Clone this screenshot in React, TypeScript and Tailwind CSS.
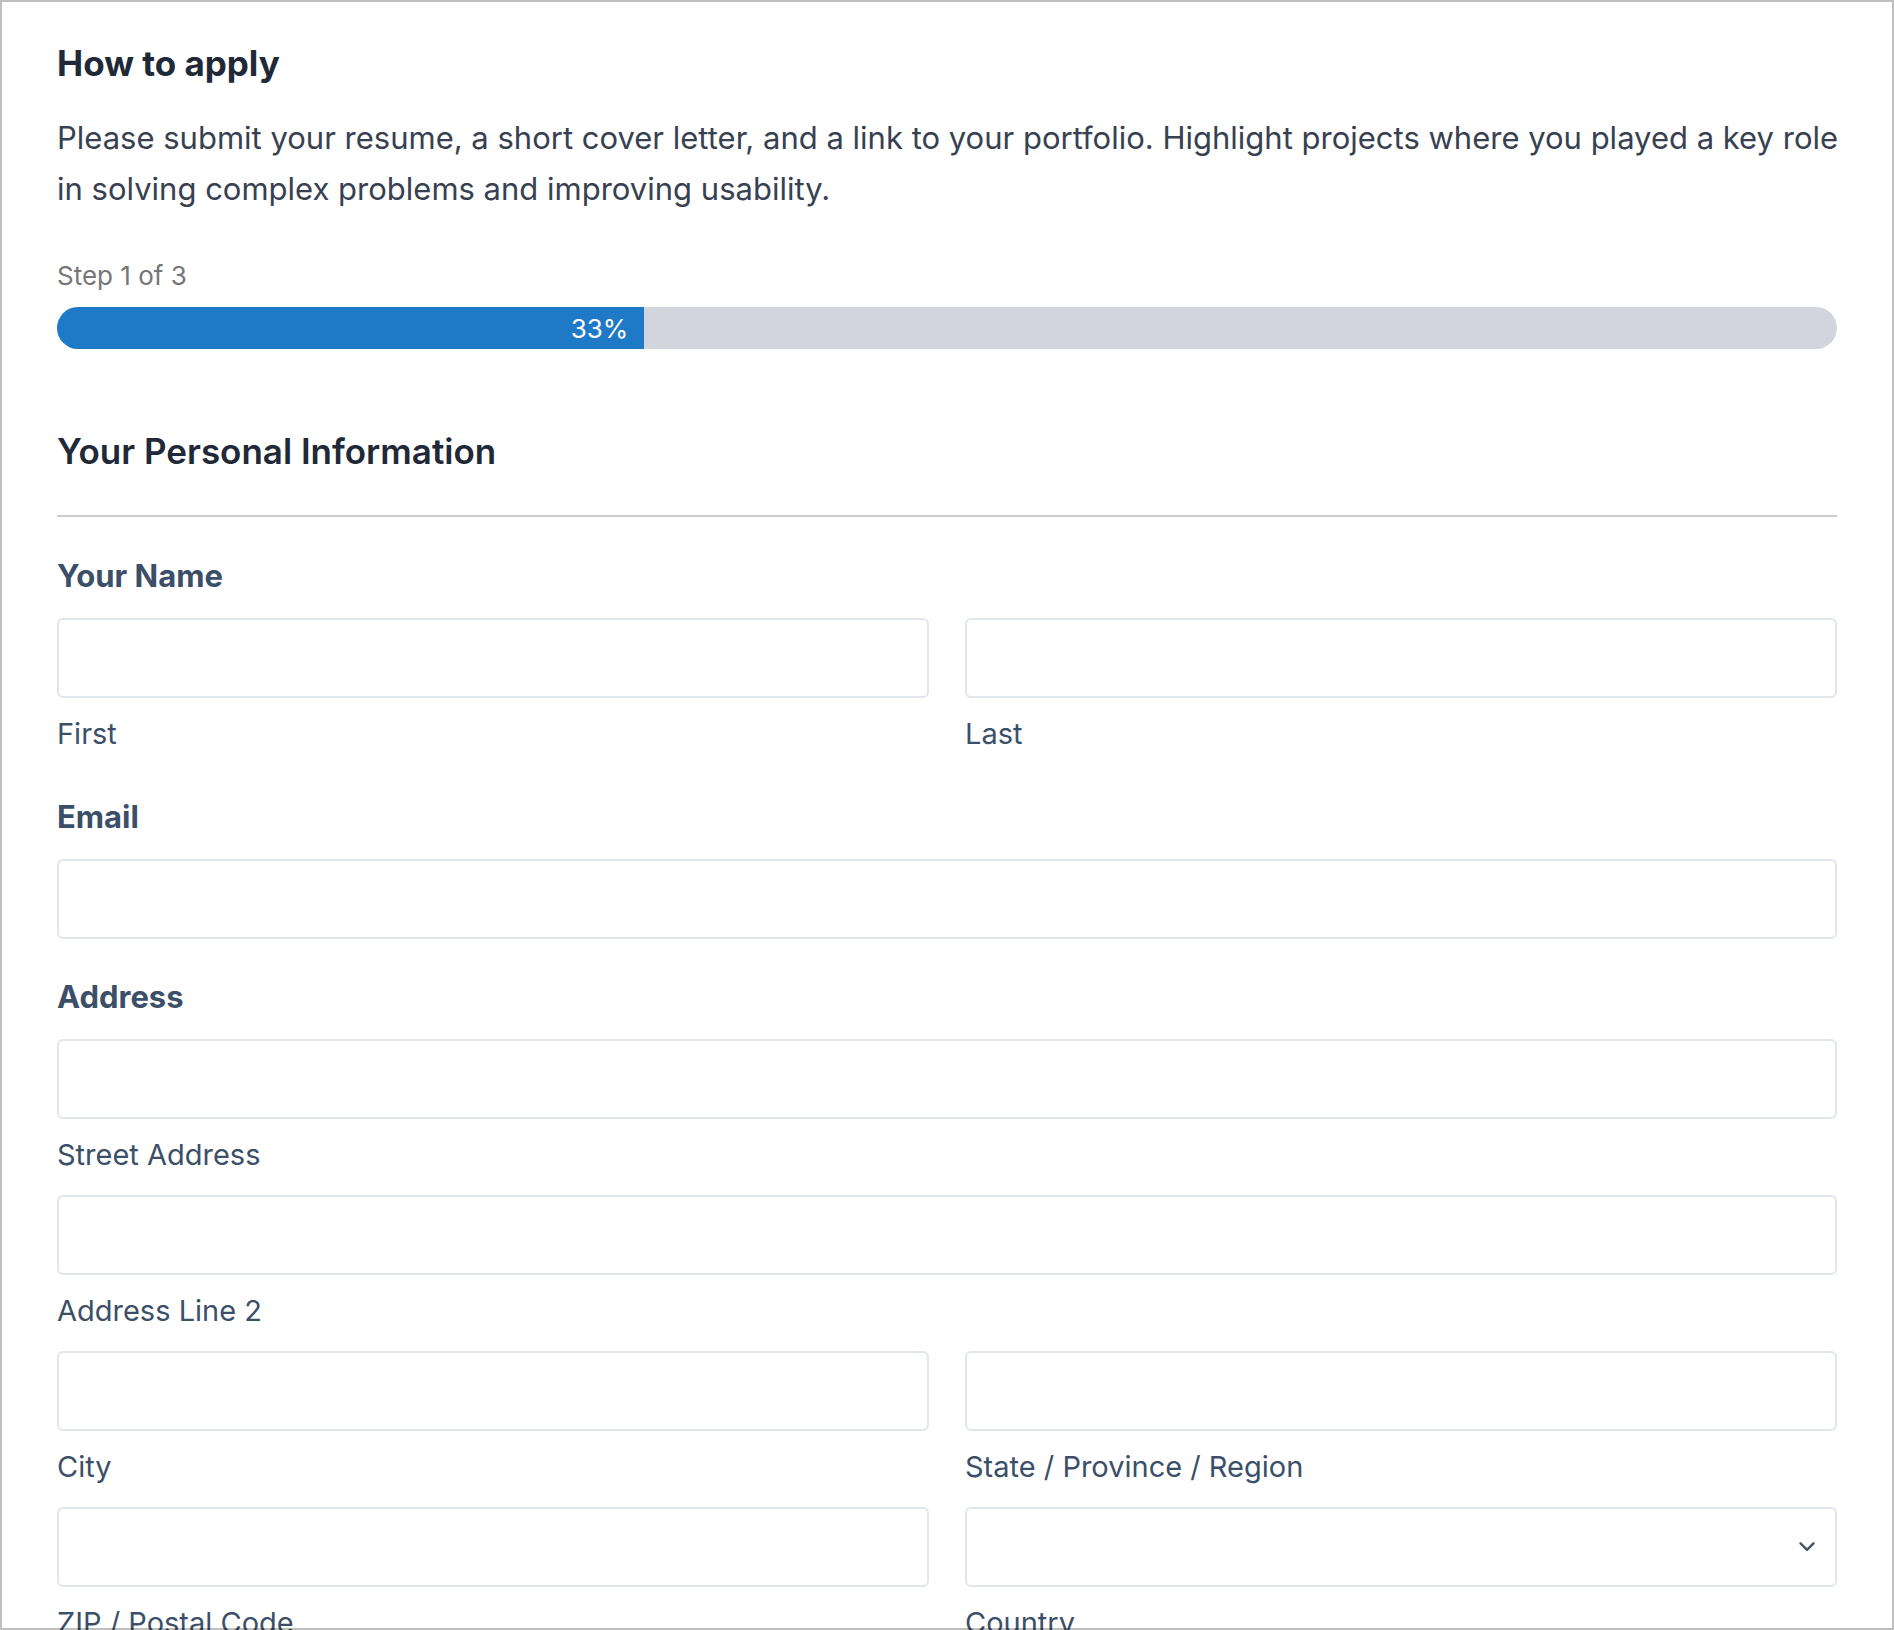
import { useState } from 'react';

const inputClass =
  'block w-full h-20 px-6 bg-white border-2 border-[#e0e6eb] rounded-md text-3xl text-[#3b5068] outline-none focus:border-[#1e7ac6]';

// @ts-ignore
function Field({ id, label, children }) {
  return (
    <div>
      {children}
      <label htmlFor={id} className="block mt-4 text-[29px] leading-10 text-[#3b5068]">
        {label}
      </label>
    </div>
  );
}

export default function App() {
  const [form, setForm] = useState({
    first: '',
    last: '',
    email: '',
    street: '',
    street2: '',
    city: '',
    state: '',
    zip: '',
    country: '',
  });
  const progress = 33;

  // @ts-ignore
  const handleChange = (e) => {
    setForm({ ...form, [e.target.name]: e.target.value });
  };

  return (
    <div className="h-screen overflow-hidden bg-white font-['Inter','Liberation_Sans',sans-serif]">
      {/* Frame sits on top of the form */}
      <div className="fixed inset-0 border-2 border-black/25 pointer-events-none" />

      <main className="px-[57px] pt-[39px]">
        <h2 className="text-[35px] leading-[48px] font-bold text-[#1f2937]">How to apply</h2>
        <p className="mt-[25px] -mr-3 text-[31px] leading-[51px] text-[#374151]">
          Please submit your resume, a short cover letter, and a link to your portfolio. Highlight projects where you played a key role in solving complex problems and improving usability.
        </p>

        {/* Progress */}
        <p className="mt-11 text-[26px] leading-9 text-[#767676]">Step 1 of 3</p>
        <div className="mt-[13px] h-[42px] rounded-full bg-[#d2d5dd] overflow-hidden">
          <div
            className="h-full pr-4 bg-[#1e7ac6] flex items-center justify-end text-[26px] text-white"
            style={{ width: `${progress}%` }}
          >
            {progress}%
          </div>
        </div>

        <form onSubmit={(e) => e.preventDefault()}>
          <h3 className="mt-[78px] pb-10 border-b-2 border-[#cccccc] text-[35px] leading-[48px] font-semibold text-[#1f2937]">
            Your Personal Information
          </h3>

          <fieldset className="mt-[39px]">
            <legend className="mb-[22px] text-[31px] leading-10 font-bold text-[#3b5068]">Your Name</legend>
            <div className="grid grid-cols-2 gap-x-9">
              <Field id="first" label="First">
                <input id="first" name="first" type="text" value={form.first} onChange={handleChange} className={inputClass} />
              </Field>
              <Field id="last" label="Last">
                <input id="last" name="last" type="text" value={form.last} onChange={handleChange} className={inputClass} />
              </Field>
            </div>
          </fieldset>

          <div className="mt-[43px]">
            <label htmlFor="email" className="block mb-[22px] text-[31px] leading-10 font-bold text-[#3b5068]">
              Email
            </label>
            <input id="email" name="email" type="email" value={form.email} onChange={handleChange} className={inputClass} />
          </div>

          <fieldset className="mt-[38px]">
            <legend className="mb-[22px] text-[31px] leading-10 font-bold text-[#3b5068]">Address</legend>
            <div className="grid grid-cols-2 gap-x-9 gap-y-5">
              <div className="col-span-2">
                <Field id="street" label="Street Address">
                  <input id="street" name="street" type="text" value={form.street} onChange={handleChange} className={inputClass} />
                </Field>
              </div>
              <div className="col-span-2">
                <Field id="street2" label="Address Line 2">
                  <input id="street2" name="street2" type="text" value={form.street2} onChange={handleChange} className={inputClass} />
                </Field>
              </div>
              <Field id="city" label="City">
                <input id="city" name="city" type="text" value={form.city} onChange={handleChange} className={inputClass} />
              </Field>
              <Field id="state" label="State / Province / Region">
                <input id="state" name="state" type="text" value={form.state} onChange={handleChange} className={inputClass} />
              </Field>
              <Field id="zip" label="ZIP / Postal Code">
                <input id="zip" name="zip" type="text" value={form.zip} onChange={handleChange} className={inputClass} />
              </Field>
              <Field id="country" label="Country">
                <div className="relative">
                  <select
                    id="country"
                    name="country"
                    value={form.country}
                    onChange={handleChange}
                    className={`${inputClass} appearance-none`}
                  >
                    <option value=""></option>
                  </select>
                  <svg
                    className="absolute right-5 top-1/2 -translate-y-1/2 w-5 h-5 text-[#475569] pointer-events-none"
                    viewBox="0 0 20 20"
                    fill="none"
                    stroke="currentColor"
                  >
                    <path strokeLinecap="round" strokeLinejoin="round" strokeWidth={2.4} d="M3.5 6.3l6.5 6.5 6.5-6.5" />
                  </svg>
                </div>
              </Field>
            </div>
          </fieldset>
        </form>
      </main>
    </div>
  );
}
